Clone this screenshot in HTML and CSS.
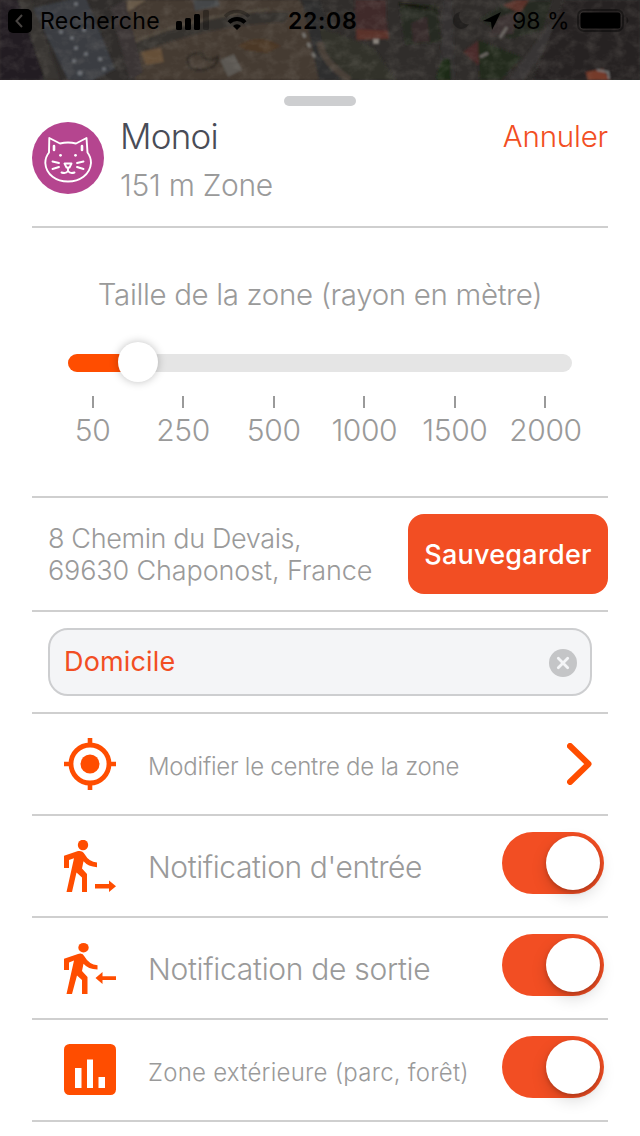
FILE: index.html
```html
<!DOCTYPE html>
<html lang="fr">
<head>
<meta charset="utf-8">
<title>Zone</title>
<link rel="stylesheet" href="styles.css">
</head>
<body>
<header class="map">
  <svg class="map-art" width="640" height="80" viewBox="0 0 640 80">
    <defs>
      <filter id="ground" x="0" y="0" width="100%" height="100%">
        <feTurbulence type="fractalNoise" baseFrequency="0.08 0.1" numOctaves="4" seed="8"/>
        <feColorMatrix values="0 0 0 0 0.38  0 0 0 0 0.35  0 0 0 0 0.31  1.8 0 0 0 -0.75"/>
      </filter>
      <filter id="soft"><feGaussianBlur stdDeviation="0.8"/></filter>
    </defs>
    <rect width="640" height="80" fill="#302d2b"/>
    <g filter="url(#soft)">
      <path d="M0 0H28L55 80H0z" fill="#221f20"/>
      <path d="M18 0H32L60 80H45z" fill="#373431"/>
      <path d="M125 0H300L335 80H135z" fill="#443a32"/>
      <path d="M128 46Q210 10 290 12L285 22Q200 25 130 57z" fill="#35312d"/>
      <path d="M130 43Q200 15 270 9" fill="none" stroke="#51483e" stroke-width="3"/>
      <path d="M128 0H146L126 13z" fill="#685a48"/>
      <path d="M33 8L85 -4L115 69L90 82L68 80z" fill="#3a3d43"/>
      <path d="M193 0H218L220 6L195 11z" fill="#44474a"/>
      <path d="M141 52L161 48L164 62L146 65z" fill="#655039"/>
      <path d="M238 46Q258 32 281 46L267 53L246 50z" fill="#4c3928"/>
      <path d="M188 57Q186 71 201 70Q217 69 218 57Q205 64 202 53Q197 51 188 57" fill="none" stroke="#292620" stroke-width="2"/>
      <path d="M220 60L234 54L242 70L228 77z" fill="#5c5852"/>
      <path d="M110 8L125 0L143 72L130 80z" fill="#3b3635"/>
      <path d="M302 0H320L340 80H319z" fill="#2d2d2d"/>
      <path d="M303 33L316 60" stroke="#777470" stroke-width="3" stroke-dasharray="5 6"/>
      <path d="M320 28Q325 64 350 80H396L374 48L340 34z" fill="#33322c"/>
      <path d="M320 42Q322 62 350 80" fill="none" stroke="#484139" stroke-width="7"/>
      <path d="M355 0H386V18L389 38L356 40z" fill="#40292a"/>
      <path d="M356 29L388 31L389 39L357 40z" fill="#5a3329"/>
      <path d="M373 39h6v5h-6z" fill="#88827c"/>
      <path d="M399 3L437 5L441 42L405 45z" fill="#262b20"/>
      <path d="M399 4L436 9" stroke="#12140f" stroke-width="3"/>
      <path d="M411 23L427 16L430 42L413 43z" fill="#352b2b"/>
      <path d="M443 0H452L455 80H440z" fill="#343231"/>
      <path d="M480 19L512 0H552L542 30L511 39z" fill="#252a20"/>
      <path d="M499 17L520 10L513 34L489 35z" fill="#3b3131"/>
      <path d="M503 5L516 0H529L520 13z" fill="#5a3029"/>
      <path d="M463 52L479 40L493 50L478 65z" fill="#4a2c29"/>
      <path d="M478 40L522 57L501 80H480z" fill="#22291f"/>
      <path d="M436 80Q441 52 450 60L451 80z" fill="#1b2918"/>
      <path d="M565 20L524 80H508L550 23z" fill="#393634"/>
      <path d="M564 0H640V80H533z" fill="#252321"/>
      <path d="M586 72L603 69L610 80H588z" fill="#753a29"/>
      <path d="M597 70L608 72L609 79" fill="none" stroke="#777" stroke-width="2"/>
      <path d="M500 38L507 27M480 57L488 53" stroke="#6c6864" stroke-width="3"/>
      <g fill="#6d7075"><circle cx="76" cy="4" r="2"/><circle cx="61" cy="32" r="2"/><circle cx="72" cy="38" r="2"/><circle cx="84" cy="30" r="2"/><circle cx="76" cy="48" r="2"/><circle cx="74" cy="61" r="2"/><circle cx="86" cy="54" r="2"/><circle cx="80" cy="73" r="2.5"/><circle cx="100" cy="59" r="2"/><circle cx="104" cy="69" r="2"/></g>
    </g>
    <rect width="640" height="80" filter="url(#ground)" opacity=".2"/>
  </svg>
  <div class="status">
    <svg class="back" width="24" height="24" viewBox="0 0 24 24"><rect width="24" height="24" rx="5"/><path d="M14 6L8.500 12L14 18" fill="none" stroke="#484442" stroke-width="2"/></svg>
    <span class="back-label">Recherche</span>
    <svg class="signal" width="74" height="24" viewBox="0 0 74 24"><rect y="12" width="6" height="9" rx="1.500"/><rect x="9" y="9" width="6" height="12" rx="1.500"/><rect x="18" y="5" width="6" height="16" rx="1.500"/><rect x="27" y="1" width="6" height="20" rx="1.500" opacity=".3"/><path d="M61 21l-4-4a5.700 5.700 0 0 1 8 0z"/><path d="M53 13.500a11 11 0 0 1 16 0" fill="none" stroke="#000" stroke-width="4"/><path d="M49 7.500a17 17 0 0 1 24 0" fill="none" stroke="#000" stroke-width="3.500" opacity=".3"/></svg>
    <span class="time">22:08</span>
    <svg class="locate" width="50" height="24" viewBox="0 0 50 24"><path d="M8 3a8.500 8.500 0 1 0 9 12A8.500 8.500 0 0 1 8 3z" opacity=".3"/><path d="M49 3L40 21L39 13L31 12z"/></svg>
    <span class="percent">98 %</span>
    <svg class="battery" width="54" height="24" viewBox="0 0 54 24"><rect x="1" y="1" width="45" height="21" rx="6" fill="none" stroke="#000" stroke-width="2" opacity=".4"/><rect x="3.500" y="3.500" width="40" height="16" rx="2.500"/><path d="M49.500 8q4 3.500 0 7z" opacity=".4"/></svg>
  </div>
</header>
<main class="sheet">
  <div class="handle"></div>
  <section class="pet">
    <svg class="avatar" width="72" height="72" viewBox="0 0 72 72"><circle cx="36" cy="36" r="36" fill="#b5458f"/><g fill="none" stroke="#fff" stroke-width="1.900" stroke-linecap="round" stroke-linejoin="round"><path d="M17.300 16L28 21.500Q36 19.500 44 21.500L54.500 16L55.500 30.500Q59 35 59 41C58 53 47.500 59.500 36 59.500S14 53 13.300 41Q13.300 35 17 30.500z"/><path d="M22 24v4M50 24v4" stroke-width="2.600"/><path d="M20.500 39.500L27 41M20.500 47L27 45M51.500 39.500L45 41M51.500 47L45 45"/><path d="M32.500 41.500H39.500L37.500 45.500H34.500zM36 46v3M36 49Q34 52 29.500 50.500M36 49Q38 52 42.500 50.500"/></g><g fill="#fff"><circle cx="28.500" cy="33.300" r="1.400"/><circle cx="43.500" cy="33.300" r="1.400"/></g></svg>
    <div class="pet-info"><h1 class="pet-name">Monoi</h1><p class="pet-zone">151 m Zone</p></div>
    <a class="cancel">Annuler</a>
  </section>
  <section class="radius">
    <h2 class="radius-title">Taille de la zone (rayon en mètre)</h2>
    <div class="track"><div class="fill"></div><div class="knob"></div></div>
    <ol class="scale"><li>50</li><li>250</li><li>500</li><li>1000</li><li>1500</li><li>2000</li></ol>
  </section>
  <section class="place">
    <p class="address"><span class="street">8 Chemin du Devais,</span><br><span class="city">69630 Chaponost, France</span></p>
    <button class="save">Sauvegarder</button>
  </section>
  <section class="name-row">
    <div class="field"><span class="field-text">Domicile</span><svg class="clear" width="28" height="28" viewBox="0 0 28 28"><circle cx="14" cy="14" r="14" fill="#c4c5c7"/><path d="M9.300 9.300L18.700 18.700M18.700 9.300L9.300 18.700" stroke="#f4f5f7" stroke-width="2.800" stroke-linecap="round"/></svg></div>
  </section>
  <section class="option">
    <svg class="icon" width="52" height="52" viewBox="0 0 52 52"><circle cx="26" cy="26" r="19" fill="none" stroke="#ff4d00" stroke-width="4.800"/><circle cx="26" cy="26" r="9.500" fill="#ff4d00"/><path d="M26 0V7M26 45V52M0 26H7M45 26H52" stroke="#ff4d00" stroke-width="4.600"/></svg>
    <span class="label small modify">Modifier le centre de la zone</span>
    <svg class="chevron" width="26" height="42" viewBox="0 0 26 42"><path d="M3 3L21.500 21L3 39" fill="none" stroke="#ff4d00" stroke-width="6" stroke-linecap="round" stroke-linejoin="round"/></svg>
  </section>
  <section class="option">
    <svg class="icon" width="52" height="52" viewBox="0 0 52 52" fill="#ff4d00"><circle cx="19" cy="5" r="5.200"/><path d="M0 15.800L14 11Q18.500 10.300 20.500 14Q25 22 33 22.600V27.200Q24 26.500 19.500 21.200L18 28.500L23 34V52H18V37.500L12.500 32.500L8 52H2.500L10 18.300L5 20V28H0z"/><path d="M31 44H45V40.500L52 46.200L45 52V48.500H31z"/></svg>
    <span class="label entry">Notification d'entrée</span>
    <div class="toggle"><div class="toggle-knob"></div></div>
  </section>
  <section class="option">
    <svg class="icon" width="52" height="52" viewBox="0 0 52 52" fill="#ff4d00"><ellipse cx="19.500" cy="5.700" rx="5.200" ry="4.800"/><path d="M0 16.800L14 12Q18.500 10.300 20.500 14.500Q25 22.500 33.500 23.200V27.600Q24 27 19.500 21.700L18 29L23.500 35V52H18V38L13 33.500L8 52H2.500L10 18.500L5 20.500V28H0z"/><path d="M52 34.200H38.500V30L31.500 36L38.500 42V38H52z"/></svg>
    <span class="label exit">Notification de sortie</span>
    <div class="toggle"><div class="toggle-knob"></div></div>
  </section>
  <section class="option">
    <svg class="icon" width="52" height="52" viewBox="0 0 52 52"><rect width="52" height="51" rx="5.500" fill="#ff4d00"/><path d="M11 24H17.500V44H11zM23 15.500H29V44H23zM34.500 33H41V44H34.500z" fill="#fff"/></svg>
    <span class="label small outdoor">Zone extérieure (parc, forêt)</span>
    <div class="toggle"><div class="toggle-knob"></div></div>
  </section>
</main>
</body>
</html>
```
FILE: styles.css
```css
* { box-sizing: border-box; margin: 0; padding: 0; }
body { width: 640px; height: 1136px; overflow: hidden; background: #fff; color: #9a9a9a; font-family: Inter, "Open Sans", sans-serif; font-weight: 300; font-optical-sizing: none; }
svg { display: block; flex: none; }
.map { position: relative; height: 80px; overflow: hidden; }
.map-art { position: absolute; inset: 0; }
.status { position: relative; display: flex; align-items: center; height: 42px; padding-left: 8px; color: #000; font-size: 23px; white-space: nowrap; }
.back-label { width: 128px; margin-left: 8px; font-weight: 400; letter-spacing: .4px; }
.signal { margin-left: 8px; }
.time { width: 80px; margin-left: 38px; font-weight: 600; letter-spacing: .7px; }
.locate { margin-left: 84px; margin-right: 10px; }
.percent { width: 65px; font-weight: 400; }
.sheet { padding: 0 32px; }
.handle { width: 72px; height: 10px; margin: 16px auto; border-radius: 5px; background: #cdced0; }
.pet { display: flex; height: 106px; border-bottom: 2px solid #cfcfcf; }
.pet-info { flex: 1; padding-left: 16px; white-space: nowrap; }
.pet-name { height: 29px; line-height: 29px; font-size: 35px; font-weight: 300; letter-spacing: -.8px; color: #494c57; }
.pet-zone { margin-top: 19px; line-height: 30px; font-size: 30px; letter-spacing: -.3px; }
.cancel { line-height: 29px; font-size: 29.500px; letter-spacing: -.2px; color: #f24e23; }
.radius { height: 270px; padding-top: 51px; border-bottom: 2px solid #cfcfcf; }
.radius-title { height: 31px; line-height: 30px; font-size: 29.500px; font-weight: 300; letter-spacing: -.35px; text-align: center; white-space: nowrap; }
.track { position: relative; height: 18px; margin: 44px 36px 24px; border-radius: 9px; background: #e5e5e5; }
.fill { width: 70px; height: 18px; border-radius: 9px 0 0 9px; background: #ff4d00; }
.knob { position: absolute; left: 50px; top: -12px; width: 40px; height: 40px; border-radius: 50%; background: #fff; box-shadow: 0 0 8px rgba(0,0,0,.25); }
.scale { display: grid; grid-template-columns: repeat(6, 90.600px); justify-content: center; margin-left: -2px; list-style: none; font-size: 30px; line-height: 34px; letter-spacing: -.4px; text-align: center; text-indent: 1.500px; }
.scale li::before { content: ""; display: block; width: 2px; height: 12px; margin: 0 auto 5px; background: #9a9a9a; }
.place { display: flex; align-items: center; justify-content: space-between; height: 114px; padding-left: 16px; border-bottom: 2px solid #cfcfcf; }
.address { padding-top: 2px; font-size: 27px; line-height: 32px; white-space: nowrap; }
.street { letter-spacing: -.37px; }
.city { letter-spacing: -.13px; }
.save { width: 200px; height: 80px; border: 0; border-radius: 16px; background: #f24e23; color: #fff; font: 500 27px Inter, sans-serif; letter-spacing: .25px; }
.name-row { height: 102px; padding: 16px; border-bottom: 2px solid #cfcfcf; }
.field { display: flex; align-items: center; justify-content: space-between; height: 68px; padding: 0 13px 0 14px; border: 2px solid #cdced0; border-radius: 20px; background: #f4f5f7; color: #f24e23; font-size: 27px; font-weight: 400; }
.field-text { padding-bottom: 2px; letter-spacing: .15px; }
.clear { margin-top: 1px; }
.option { display: flex; align-items: center; height: 102px; padding: 0 4px 0 32px; border-bottom: 2px solid #cfcfcf; white-space: nowrap; }
.icon { margin-right: 32px; }
.label { flex: 1; font-size: 30px; padding-top: 1px; }
.entry { letter-spacing: -.42px; }
.exit { letter-spacing: -.3px; }
.small { font-size: 24px; padding-top: 5px; }
.modify { letter-spacing: -.25px; }
.outdoor { letter-spacing: .25px; }
.chevron { margin-right: 11px; }
.toggle { display: flex; justify-content: flex-end; width: 102px; height: 62px; padding: 4px; border-radius: 31px; background: #f24e23; margin-bottom: 6px; }
.toggle-knob { width: 54px; height: 54px; border-radius: 50%; background: #fff; box-shadow: 0 6px 16px rgba(0,0,0,.15), 0 2px 4px rgba(0,0,0,.2); }
```
